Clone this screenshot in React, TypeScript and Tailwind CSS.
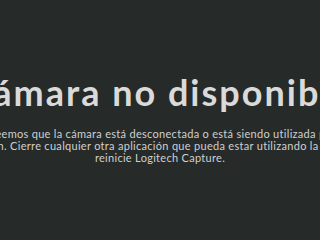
export default function App() {
  return (
    <main className="h-screen w-screen overflow-hidden bg-[#262a29] flex flex-col items-center justify-center font-['Lato',sans-serif]">
      <h1 className="shrink-0 whitespace-nowrap text-[36px] leading-[40px] font-bold tracking-[2px] text-[#dadada]">
        Cámara no disponible
      </h1>
      <p className="mt-[16px] mb-[4px] shrink-0 whitespace-nowrap text-center text-[11px] leading-[12px] tracking-[0.3px] text-[#d0d0d0]">
        Creemos que la cámara está desconectada o está siendo utilizada por
        <br />
        aplicación. Cierre cualquier otra aplicación que pueda estar utilizando la cámara y
        <br />
        reinicie Logitech Capture.
      </p>
    </main>
  )
}
